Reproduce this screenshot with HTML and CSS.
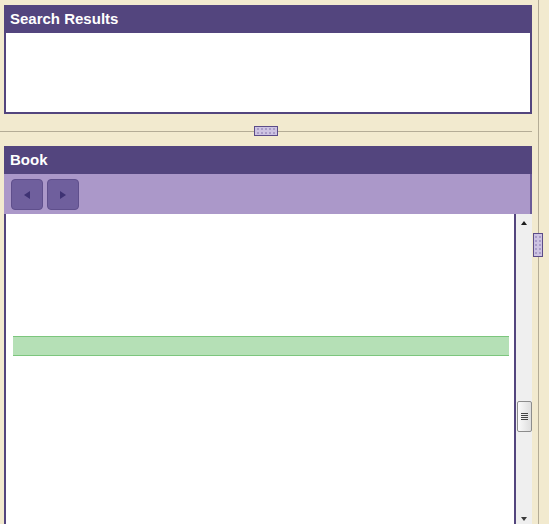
FILE: index.html
```html
<!DOCTYPE html>
<html lang="en">
<head>
    <meta charset="UTF-8">
    <meta name="viewport" content="width=device-width, initial-scale=1.0">
    <title>Book Reader</title>
    <link rel="stylesheet" href="styles.css">
</head>
<body>
    <div class="layout">
        <!-- Coluna principal: resultados + livro -->
        <div class="main-col">
            <div class="panel search-panel">
                <div class="panel-header">Search Results</div>
                <div class="search-body"></div>
            </div>

            <!-- Divisor horizontal entre os painéis -->
            <div class="hsplit">
                <span class="grip grip-h"></span>
            </div>

            <div class="panel book-panel">
                <div class="panel-header">Book</div>
                <div class="toolbar">
                    <button class="nav-btn" title="Previous"><span class="tri tri-left"></span></button>
                    <button class="nav-btn" title="Next"><span class="tri tri-right"></span></button>
                </div>
                <div class="book-body">
                    <div class="page">
                        <div class="highlight"></div>
                    </div>
                    <div class="scrollbar">
                        <span class="arrow arrow-up"></span>
                        <span class="thumb"><i></i><i></i><i></i><i></i></span>
                        <span class="arrow arrow-down"></span>
                    </div>
                </div>
            </div>
        </div>

        <!-- Divisor vertical à direita -->
        <div class="vsplit">
            <span class="grip grip-v"></span>
        </div>
    </div>
</body>
</html>
```

FILE: styles.css
```css
body {
    font-family: "Liberation Sans", Arial, sans-serif;
    background-color: #f2eacf;
    margin: 0;
    padding: 0;
    height: 524px;
    overflow: hidden;
}
.layout {
    display: flex;
    height: 524px;
}
.main-col {
    width: 532px;
    padding-top: 5px;
    display: flex;
    flex-direction: column;
}
/* Painéis */
.panel {
    margin-left: 4px;
    background-color: #53457e;
}
.panel-header {
    height: 28px;
    line-height: 28px;
    padding-left: 6px;
    color: #fff;
    font-size: 15px;
    font-weight: bold;
}
.search-panel {
    height: 109px;
    display: flex;
    flex-direction: column;
}
.search-body {
    flex: 1;
    background-color: #fff;
    margin: 0 2px 2px 2px;
}
/* Divisor horizontal */
.hsplit {
    height: 32px;
    display: flex;
    align-items: center;
    justify-content: center;
    background: linear-gradient(#b4ac96, #b4ac96) 0 17px / 100% 1px no-repeat;
}
.grip {
    box-sizing: border-box;
    border: 1px solid #5b4c88;
    background-color: #cdc3e2;
    background-image: radial-gradient(circle, #a99cc8 0.9px, transparent 1.1px);
}
.grip-h {
    width: 24px;
    height: 10px;
    margin-top: 1px;
    background-size: 4px 4px;
    background-position: 1px 0;
}
.book-panel {
    flex: 1;
    display: flex;
    flex-direction: column;
}
.toolbar {
    height: 40px;
    background-color: #ab98c9;
    border-right: 2px solid #6b5b98;
    display: flex;
    align-items: center;
    gap: 4px;
    padding-left: 7px;
}
.nav-btn {
    width: 32px;
    height: 31px;
    margin-top: 1px;
    background-color: #6f5f9d;
    border: 1px solid #5f4f8c;
    border-radius: 4px;
    padding: 0;
    display: flex;
    align-items: center;
    justify-content: center;
}
.tri {
    width: 0;
    height: 0;
    border-top: 4px solid transparent;
    border-bottom: 4px solid transparent;
}
.tri-left {
    border-right: 6px solid #3e3273;
}
.tri-right {
    border-left: 6px solid #3e3273;
}
/* Área do livro */
.book-body {
    flex: 1;
    display: flex;
    background-color: #f2eacf;
}
.page {
    flex: 1;
    background-color: #fff;
    border-left: 2px solid #53457e;
    border-right: 2px solid #53457e;
    padding-top: 122px;
}
.highlight {
    height: 18px;
    margin: 0 5px 0 7px;
    background-color: #b5e0b6;
    border-top: 1px solid #7cc67d;
    border-bottom: 1px solid #7cc67d;
}
.scrollbar {
    width: 16px;
    background-color: #efefef;
    position: relative;
}
.arrow {
    position: absolute;
    left: 5px;
    width: 0;
    height: 0;
    border-left: 3.5px solid transparent;
    border-right: 3.5px solid transparent;
}
.arrow-up {
    top: 7px;
    border-bottom: 4px solid #1c1c1c;
}
.arrow-down {
    top: 303px;
    border-top: 4px solid #3a3a3a;
}
.thumb {
    position: absolute;
    left: 1px;
    top: 187px;
    width: 15px;
    height: 31px;
    box-sizing: border-box;
    border: 1px solid #8c8c8c;
    border-radius: 2px;
    background: linear-gradient(to right, #fafafa, #dedede);
    display: flex;
    flex-direction: column;
    align-items: center;
    justify-content: center;
    gap: 1px;
}
.thumb i {
    display: block;
    width: 7px;
    height: 1px;
    background-color: #444;
}
/* Divisor vertical */
.vsplit {
    flex: 1;
    background: linear-gradient(#b4ac96, #b4ac96) 6px 0 / 1px 100% no-repeat;
}
.grip-v {
    display: block;
    width: 10px;
    height: 24px;
    margin: 233px 0 0 1px;
    background-size: 4px 4px;
    background-position: 0 1px;
}
```
